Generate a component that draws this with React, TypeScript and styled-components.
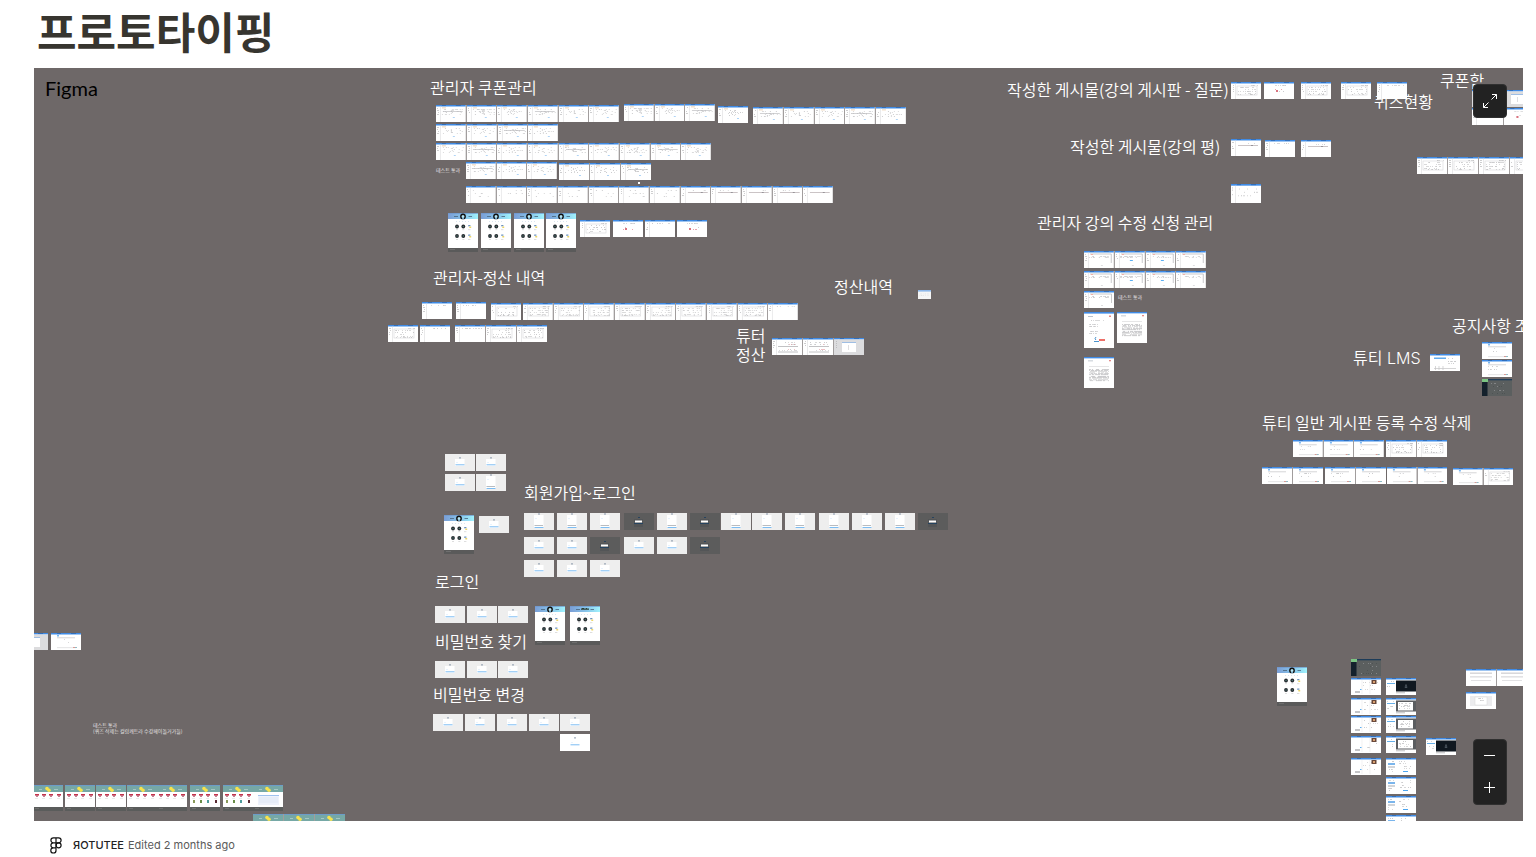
import React from 'react';
import styled, { createGlobalStyle } from 'styled-components';

const GlobalStyle = createGlobalStyle`
  * { box-sizing: border-box; }
  body {
    margin: 0;
    background: #fff;
    color: #37352f;
    font-family: Inter, "Noto Sans CJK KR", sans-serif;
  }
`;

const Page = styled.main`
  display: flex;
  flex-direction: column;
  min-height: 100vh;
  padding: 0 13px 0 34px;
`;

const Title = styled.h1`
  margin: 0;
  padding: 0 3px 8px;
  font-family: "Noto Sans CJK KR", sans-serif;
  font-size: 43px;
  font-weight: 700;
  line-height: 60px;
`;

const Embed = styled.section`
  position: relative;
  flex: 1 0 auto;
  min-height: 480px;
  overflow: hidden;
  background: #6e6868;
`;

const Logo = styled.a`
  position: absolute;
  top: 8px;
  left: 11px;
  color: #000;
  font-family: Lato, sans-serif;
  font-size: 20px;
  line-height: 24px;
  text-decoration: none;
`;

/* The board is panned: its origin lies up and left of the visible area. */
const Board = styled.div`
  position: absolute;
  top: -68px;
  left: -34px;
`;

const Label = styled.p<{ $x: number; $y: number; $small?: boolean; $latin?: boolean }>`
  position: absolute;
  left: ${(p) => p.$x}px;
  top: ${(p) => p.$y}px;
  margin: 0;
  color: ${(p) => (p.$small ? '#e2e0e0' : '#fff')};
  font-family: ${(p) => (p.$latin ? 'Inter, ' : '')}"Noto Sans CJK KR", sans-serif;
  font-size: ${(p) => (p.$small ? 5 : 16)}px;
  font-weight: ${(p) => (p.$small ? 400 : 350)};
  line-height: ${(p) => (p.$small ? 6 : 19)}px;
  white-space: pre;
`;

const Run = styled.div<{ $x: number; $y: number; $w: number; $h: number }>`
  position: absolute;
  left: ${(p) => p.$x}px;
  top: ${(p) => p.$y}px;
  width: ${(p) => p.$w}px;
  height: ${(p) => p.$h}px;
  display: flex;
  gap: 1px;
  background: #a19d9d;
`;

const Thumb = styled.svg`
  display: block;
  flex: 1 1 0;
  min-width: 0;
  height: 100%;
`;

const Controls = styled.div<{ $edge: 'top' | 'bottom' }>`
  position: absolute;
  right: 16px;
  ${(p) => p.$edge}: 16px;
  display: flex;
  flex-direction: column;
  border: 1px solid #303030;
  border-radius: 4px;
  background: #222;
`;

const ControlButton = styled.button`
  display: flex;
  align-items: center;
  justify-content: center;
  width: 32px;
  height: 32px;
  padding: 0;
  border: 0;
  background: transparent;
  color: #fff;
  cursor: pointer;
`;

const Footer = styled.footer`
  display: flex;
  align-items: center;
  height: 36px;
  padding: 12px 16px 0;
  font-size: 11px;
  line-height: 16px;
`;

const FooterIcon = styled.svg`
  width: 12px;
  height: 17px;
  margin-right: 11px;
`;

const FileLink = styled.a`
  margin-right: 4px;
  color: #222;
  font-weight: 500;
  text-decoration: none;
`;

const Edited = styled.span`
  color: #5a5a5a;
`;

type Kind =
  | 'table' | 'sparse' | 'line' | 'grid' | 'empty' | 'redTable' | 'redForm' | 'doc' | 'code' | 'notice'
  | 'login' | 'loginTall' | 'darkLogin' | 'whiteLogin' | 'modal' | 'dialog' | 'landing' | 'node'
  | 'shop' | 'shopFull' | 'calendar' | 'course' | 'player' | 'playerDoc' | 'settings' | 'darkLms'
  | 'list' | 'admin' | 'schedule' | 'blank';

type Mark = { x: number; y: number; w: number; c: string };

const noise = (n: number) => {
  const v = Math.sin(n * 12.9898) * 43758.5453;
  return v - Math.floor(v);
};

const scatter = (
  seed: number,
  rows: number[],
  from: number,
  to: number,
  density: number,
  color = '#b9b9bb',
): Mark[] =>
  rows.flatMap((y, r) => {
    const marks: Mark[] = [];
    for (let x = from; x < to; x += 1) {
      const n = noise(seed * 31 + r * 57 + x * 3);
      if (n < density) marks.push({ x, y, w: 1, c: n < density / 3 ? '#a2a2a5' : color });
    }
    return marks;
  });

function Marks({ items }: { items: Mark[] }) {
  return (
    <>
      {items.map((m, i) => (
        <rect key={i} x={m.x} y={m.y} width={m.w} height={1} fill={m.c} opacity={0.55} />
      ))}
    </>
  );
}

function TopBar() {
  return (
    <>
      <rect width={30} height={1.5} fill="#3f8be6" />
      <rect x={6} width={4} height={1} fill="#2f6fbe" />
      <rect x={20} width={5} height={1} fill="#2f6fbe" />
    </>
  );
}

function SideBar({ seed }: { seed: number }) {
  return (
    <>
      <rect x={4} y={1.5} width={0.6} height={15.5} fill="#dcdcde" />
      <Marks items={scatter(seed, [3, 5, 7, 9], 1, 3, 0.6, '#a5a5a8')} />
    </>
  );
}

function LoginCard({ tall, dark }: { tall?: boolean; dark?: boolean }) {
  if (dark) {
    return (
      <g>
        <rect x={10} y={6} width={9} height={8} fill="#535557" />
        <rect x={14} y={4} width={2} height={1} fill="#27435f" />
        <rect x={11} y={7.5} width={7} height={2} fill="#fff" />
        <rect x={10} y={10} width={9} height={1} fill="#25435f" />
      </g>
    );
  }
  const top = tall ? 2 : 5;
  return (
    <g>
      <rect x={10} y={top} width={9.5} height={tall ? 13 : 7} fill="#fff" />
      <rect x={14} y={tall ? 0.5 : 3.4} width={2} height={1} fill="#8a98ab" />
      {tall && <rect x={10.5} y={12} width={8.5} height={1} fill="#b9bcc0" />}
      <rect x={10.5} y={tall ? 14 : 10.3} width={9} height={1} fill="#7dbdf3" />
      <rect x={11.5} y={top + 3} width={1} height={0.6} fill="#b5d8f7" />
    </g>
  );
}

function Logos() {
  return (
    <g>
      {[13.5, 23].map((cy) => (
        <g key={cy}>
          {[9, 15.3].map((cx) => (
            <g key={cx}>
              <circle cx={cx} cy={cy} r={1.9} fill="#25292e" />
              <circle cx={cx} cy={cy} r={0.7} fill="#4f7c74" />
              <rect x={cx - 1} y={cy + 3} width={2} height={0.6} fill="#c9c9c9" />
            </g>
          ))}
          <path d={`M20.2 ${cy}v-1.6h2.2v1.4h-1.6z`} fill="#6b92bd" />
          <path d={`M21.2 ${cy}h2v1.6h-1.8z`} fill="#ecd667" />
          <rect x={20} y={cy + 3} width={2.4} height={0.6} fill="#c9c9c9" />
        </g>
      ))}
    </g>
  );
}

function Landing({ node }: { node?: boolean }) {
  return (
    <Thumb viewBox="0 0 30 39" preserveAspectRatio="none">
      <defs>
        <linearGradient id="hero">
          <stop offset="0" stopColor="#7a9ed6" />
          <stop offset="0.5" stopColor="#86c2e8" />
          <stop offset="1" stopColor="#a0f2fd" />
        </linearGradient>
      </defs>
      <rect width={30} height={35} fill="#fff" />
      <rect width={30} height={6} fill="url(#hero)" />
      <rect width={30} height={0.7} fill="#6f96c9" />
      <rect x={6} y={3} width={4} height={0.8} fill="#49657c" />
      <rect x={20.5} y={3} width={3.5} height={0.8} fill="#49657c" />
      {node ? (
        <path d="M11 3.2h8M12 2.6h2M16 2.6h1" stroke="#2e4034" strokeWidth={1.3} />
      ) : (
        <>
          <circle cx={15} cy={3.4} r={2.2} fill="#b7e8f6" stroke="#111" strokeWidth={1.4} />
          <rect x={14.3} y={4.6} width={1.5} height={1.6} fill="#86c2e8" />
        </>
      )}
      <Marks items={[8, 11, 14, 17, 20].map((x) => ({ x, y: 8, w: 1, c: '#bcd0e4' }))} />
      <Logos />
      <rect y={35} width={30} height={4} fill="#5a5a5a" />
      <rect x={2} y={36} width={5} height={0.7} fill="#777" />
    </Thumb>
  );
}

function Shop({ kind }: { kind: Kind }) {
  return (
    <Thumb viewBox="0 0 30 26" preserveAspectRatio="none">
      <rect width={30} height={22} fill="#fff" />
      <rect width={30} height={7} fill="#76a8a6" />
      <rect width={30} height={1} fill="#6b9cc9" />
      <circle cx={14} cy={3.6} r={1.8} fill="#f7e34d" />
      <circle cx={16} cy={5.2} r={1.8} fill="#f7e34d" />
      <rect x={6} y={4} width={3} height={0.7} fill="#b9d5d2" />
      <rect x={21} y={4} width={4} height={0.7} fill="#b9d5d2" />
      {kind === 'calendar' ? (
        <>
          <rect x={5} y={10} width={21} height={10} fill="#eef2fb" />
          <rect x={5} y={10} width={21} height={1} fill="#9fc2ee" />
          <path d="M6 13h19M6 15h19M6 17h19" stroke="#d5dff0" strokeWidth={0.6} />
        </>
      ) : (
        [2, 9, 16, 24].map((x, i) => (
          <g key={x}>
            <rect x={x} y={9} width={4} height={1.6} fill="#c4324b" />
            <rect x={x + 1} y={10.4} width={2} height={1.4} fill="#b76478" />
            <rect x={x} y={13} width={3} height={0.6} fill="#dcdcdc" />
            {kind === 'shopFull' && (
              <rect x={x + 1} y={15} width={2} height={3} fill={['#8a9a5b', '#6a8f49', '#4f9c9c', '#5a2b33'][i]} />
            )}
          </g>
        ))
      )}
      <rect y={22} width={30} height={4} fill="#5a5c5b" />
      <rect x={2} y={23} width={4} height={0.7} fill="#777" />
    </Thumb>
  );
}

function Body({ kind, seed }: { kind: Kind; seed: number }) {
  switch (kind) {
    case 'table':
      return (
        <>
          <SideBar seed={seed} />
          <rect x={6} y={2.500} width={4} height={0.8} fill="#e8c6a0" />
          <Marks items={scatter(seed, [4, 6, 7, 9], 6, 28, 0.28)} />
          <Marks items={scatter(seed + 5, [5, 8], 14, 18, 0.6)} />
          {seed % 3 === 0 && <rect x={7} y={6} width={20} height={0.6} fill="#b5b5b8" />}
          <rect x={17 + (seed % 4)} y={12} width={2} height={0.8} fill="#9ccaf4" />
        </>
      );
    case 'admin':
      return (
        <>
          <SideBar seed={seed} />
          <path d="M6 3h21.500v9" fill="none" stroke="#bcbcbe" strokeWidth={0.8} />
          <rect x={7} y={3} width={2} height={1} fill="#f0b0a8" />
          <Marks items={scatter(seed, [5, 6], 5, 26, 0.36)} />
          <rect x={15} y={9} width={3} height={1} fill={seed % 4 === 0 || seed % 4 === 3 ? '#fff' : '#5aaef2'} />
          <rect x={17} y={14} width={2} height={0.7} fill="#d0d0d2" />
        </>
      );
    case 'sparse':
      return (
        <>
          <SideBar seed={seed} />
          <Marks items={scatter(seed, [4, 7, 10], 7, 27, 0.16)} />
        </>
      );
    case 'line':
      return (
        <>
          <SideBar seed={seed} />
          <Marks items={scatter(seed, [4], 8, 25, 0.2)} />
          <rect x={7} y={6} width={20} height={0.7} fill="#b5abae" />
          <rect x={20} y={6} width={2} height={1} fill="#979398" />
        </>
      );
    case 'grid':
      return (
        <>
          <SideBar seed={seed} />
          <rect x={6} y={4} width={20} height={9} fill="none" stroke="#d8d8da" strokeWidth={0.6} />
          <Marks items={scatter(seed, [5, 7, 9, 11, 12], 7, 26, 0.34)} />
          <Marks items={scatter(seed, [3], 20, 27, 0.7)} />
        </>
      );
    case 'list':
      return (
        <>
          <rect x={4} y={3.5} width={22} height={1.4} fill="#d4d4d7" />
          <rect x={4} y={7} width={22} height={1.6} fill="#e2e2e4" />
          <rect x={5} y={11} width={20} height={1} fill="#e2e2e4" />
        </>
      );
    case 'redTable':
      return (
        <>
          <SideBar seed={seed} />
          <Marks items={scatter(seed, [4, 6, 12], 6, 26, 0.36)} />
          <path d="M6 8.500h20M6 14h20" stroke="#b3b3b5" strokeWidth={0.8} />
          <Marks items={scatter(seed + 3, [6, 11], 16, 23, 0.4, '#e08a94')} />
        </>
      );
    case 'redForm':
      return (
        <>
          <Marks items={scatter(seed, [3], 10, 22, 0.5)} />
          <Marks items={scatter(seed + 1, [7, 9], 10, 22, 0.22, '#d65a6c')} />
          <rect x={12} y={8} width={2} height={2} fill="#d9737f" />
        </>
      );
    case 'notice':
      return (
        <>
          <rect x={6} y={2} width={2} height={1.500} fill="#7bb7f0" />
          <rect x={6} y={4.500} width={18} height={0.7} fill="#c4c4c6" />
          <Marks items={scatter(seed, [6, 9], 6, 18, 0.2)} />
          <rect x={6} y={14.5} width={19} height={0.6} fill="#d2d2d4" />
          <rect x={22} y={14} width={2} height={1} fill="#d99a95" />
          <rect x={24} y={14} width={2} height={1} fill="#8fbcc5" />
        </>
      );
    case 'modal':
      return (
        <>
          <rect y={1.5} width={30} height={15.5} fill="#dcdcde" />
          <SideBar seed={seed} />
          <rect x={8} y={4} width={14} height={10} fill="#fff" />
          <rect x={8} y={4} width={14} height={0.8} fill="#88aede" />
          <path d="M14.500 7v5" stroke="#c8c8cc" strokeWidth={0.6} />
        </>
      );
    case 'dialog':
      return (
        <>
          <rect x={4} y={4} width={22} height={10} fill="#ececee" />
          <rect x={9} y={5} width={12} height={8} fill="#fff" stroke="#d6d6d8" strokeWidth={0.5} />
          <Marks items={scatter(seed, [6, 8], 11, 18, 0.4)} />
        </>
      );
    case 'schedule':
      return (
        <>
          <rect x={4} y={3.500} width={12} height={1.500} fill="#62acf0" />
          <Marks items={scatter(seed, [4, 7, 9], 18, 27, 0.45)} />
          <path d="M5.500 12v4M9 12v4M13 12v4M4 14.500h22" stroke="#c4c4c6" strokeWidth={0.7} />
        </>
      );
    case 'course':
      return (
        <>
          <Marks items={scatter(seed, [4, 7, 11], 12, 27, 0.26)} />
          <rect x={20.5} y={2} width={5} height={4} fill="#68483b" />
          <rect x={22} y={3} width={2} height={2} fill="#d9a070" />
          <path d="M11 2v14M19 2v14" stroke="#ececee" strokeWidth={0.7} />
          <rect x={4} y={13} width={5} height={2} fill="#c4c4c7" />
          <rect x={9} y={11} width={1.5} height={1} fill="#5aaef2" />
        </>
      );
    case 'player':
    case 'playerDoc':
      return (
        <>
          <rect x={1} y={5} width={8} height={1} fill="#65aee8" />
          <Marks items={scatter(seed, [3, 8, 10], 1, 8, 0.3)} />
          <rect x={10} y={2.500} width={20} height={11} fill={kind === 'player' ? '#101820' : '#5b5d60'} />
          {kind === 'player' ? (
            <path d="M19 9.500l1-3 1 3z" fill="none" stroke="#67717a" strokeWidth={0.6} />
          ) : (
            <>
              <rect x={12} y={4} width={15} height={8.500} fill="#fff" />
              <Marks items={scatter(seed, [5, 7, 8, 10], 13, 25, 0.4)} />
            </>
          )}
          <rect x={10} y={14.500} width={9} height={0.7} fill="#a5a5a8" />
        </>
      );
    case 'settings':
      return (
        <>
          <rect x={2} y={5} width={7} height={2} fill="#7ab5ec" />
          <rect x={2} y={8} width={7} height={2} fill="#d2d5d9" />
          <Marks items={scatter(seed, [3, 11, 13], 2, 8, 0.4)} />
          <Marks items={scatter(seed + 2, [3, 5, 8, 10], 13, 25, 0.2)} />
          <rect x={17} y={13} width={5} height={1} fill="#4ea6f0" />
        </>
      );
    case 'empty':
      return (
        <>
          <SideBar seed={seed} />
          <Marks items={scatter(seed, [3], 7, 27, 0.4)} />
        </>
      );
    default:
      return null;
  }
}

function Frame({ kind, seed }: { kind: Kind; seed: number }) {
  if (kind === 'landing' || kind === 'node') return <Landing node={kind === 'node'} />;
  if (kind === 'shop' || kind === 'shopFull' || kind === 'calendar') return <Shop kind={kind} />;
  if (kind === 'blank') {
    return (
      <Thumb viewBox="0 0 30 17" preserveAspectRatio="none">
        <rect width={30} height={17} fill="#f6f6f6" />
        <rect width={30} height={3} fill="#8fb8ea" />
        <Marks items={scatter(seed, [7, 10], 4, 26, 0.3)} />
      </Thumb>
    );
  }
  if (kind === 'doc' || kind === 'code') {
    return (
      <Thumb viewBox="0 0 30 36" preserveAspectRatio="none">
        <rect width={30} height={36} fill="#fff" />
        <rect width={30} height={1.6} fill="#3f8be6" />
        <rect x={4} y={4} width={5} height={1} fill="#b9c2cc" />
        <rect x={25} y={3.5} width={2} height={1.5} fill="#e58a88" />
        {kind === 'doc' ? (
          <>
            <Marks items={scatter(seed, [8, 12, 14, 19, 21], 5, 14, 0.7)} />
            <Marks items={scatter(seed + 1, [8], 14, 20, 0.6)} />
            <path d="M12 25q-2 2 0 3M10 29.500h5" fill="none" stroke="#4d93cc" strokeWidth={1} />
            <rect x={15} y={27} width={6} height={2} fill="#ee7068" />
          </>
        ) : (
          <>
            <rect x={5} y={11} width={20} height={0.6} fill="#cfcfd1" />
            <Marks
              items={scatter(seed, [14, 15, 16, 18, 19, 20, 22, 23, 24, 26, 27], 5, 25, 0.75, '#99999c')}
            />
          </>
        )}
      </Thumb>
    );
  }
  if (kind === 'darkLms') {
    return (
      <Thumb viewBox="0 0 30 17" preserveAspectRatio="none">
        <rect width={30} height={17} fill="#5b5f5f" />
        <rect width={30} height={1.3} fill="#1d3c59" />
        <rect width={5.5} height={17} fill="#14212c" />
        <rect width={6} height={3} fill="#7cc583" />
        <Marks items={scatter(seed, [4, 7, 11, 14], 8, 27, 0.2, '#44484a')} />
      </Thumb>
    );
  }
  const isLogin = kind === 'login' || kind === 'loginTall' || kind === 'darkLogin' || kind === 'whiteLogin';
  const background = kind === 'darkLogin' ? '#5c5c5c' : isLogin && kind !== 'whiteLogin' ? '#eee' : '#fff';
  return (
    <Thumb viewBox="0 0 30 17" preserveAspectRatio="none">
      <rect width={30} height={17} fill={background} />
      {isLogin ? <LoginCard tall={kind === 'loginTall'} dark={kind === 'darkLogin'} /> : <TopBar />}
      <Body kind={kind} seed={seed} />
    </Thumb>
  );
}

type RunSpec = { x: number; y: number; w?: number; h?: number; kinds: Kind[] };

const repeat = (kind: Kind, n: number): Kind[] => Array.from({ length: n }, () => kind);
const at = (y: number, xs: number[], kind: Kind, h?: number): RunSpec[] =>
  xs.map((x) => ({ x, y, h, kinds: [kind] }));

const runs: RunSpec[] = [
  { x: 436, y: 105, w: 183, kinds: repeat('table', 6) },
  { x: 624, y: 104, w: 91, kinds: repeat('table', 3) },
  { x: 718, y: 106, kinds: ['table'] },
  { x: 753, y: 107, w: 153, kinds: repeat('table', 5) },
  { x: 436, y: 124, w: 122, kinds: repeat('table', 4) },
  { x: 436, y: 143, w: 275, kinds: repeat('table', 9) },
  { x: 466, y: 162, w: 91, kinds: repeat('table', 3) },
  { x: 559, y: 163, w: 92, kinds: repeat('table', 3) },
  { x: 638, y: 182, w: 2, h: 2, kinds: ['whiteLogin'] },
  { x: 466, y: 186, w: 367, kinds: [...repeat('sparse', 7), ...repeat('line', 5)] },
  ...at(213, [448, 481, 514, 546], 'landing', 39),
  { x: 580, y: 220, kinds: ['grid'] },
  { x: 613, y: 220, kinds: ['redForm'] },
  { x: 645, y: 220, kinds: ['empty'] },
  { x: 677, y: 220, kinds: ['redForm'] },

  ...at(302, [422, 456], 'empty'),
  { x: 491, y: 303, kinds: ['grid'] },
  { x: 523, y: 303, w: 275, kinds: [...repeat('grid', 8), 'empty'] },
  { x: 388, y: 325, kinds: ['grid'] },
  { x: 420, y: 325, kinds: ['empty'] },
  { x: 455, y: 325, w: 92, kinds: ['empty', 'grid', 'grid'] },
  { x: 772, y: 338, w: 92, kinds: ['redTable', 'redTable', 'modal'] },
  { x: 918, y: 290, w: 13, h: 9, kinds: ['blank'] },

  ...at(82, [1231, 1301, 1341], 'grid'),
  { x: 1264, y: 82, kinds: ['redForm'] },
  { x: 1377, y: 82, kinds: ['empty'] },
  { x: 1231, y: 139, kinds: ['line'] },
  { x: 1265, y: 140, kinds: ['empty'] },
  { x: 1301, y: 140, kinds: ['line'] },
  { x: 1231, y: 184, h: 19, kinds: ['sparse'] },
  { x: 1417, y: 157, w: 123, kinds: repeat('grid', 4) },
  { x: 1472, y: 90, w: 61, kinds: ['modal', 'modal'] },
  { x: 1472, y: 108, w: 63, kinds: ['empty', 'redForm'] },

  { x: 1084, y: 251, w: 122, kinds: repeat('admin', 4) },
  { x: 1084, y: 271, w: 122, kinds: repeat('admin', 4) },
  { x: 1084, y: 291, kinds: ['admin'] },
  { x: 1084, y: 312, h: 36, kinds: ['doc'] },
  { x: 1117, y: 312, h: 31, kinds: ['code'] },
  { x: 1084, y: 357, h: 31, kinds: ['code'] },

  { x: 1430, y: 354, kinds: ['schedule'] },
  ...at(342, [1482], 'notice'),
  ...at(360, [1482], 'notice'),
  { x: 1482, y: 379, kinds: ['darkLms'] },
  { x: 1293, y: 440, w: 91, kinds: repeat('notice', 3) },
  { x: 1386, y: 440, w: 61, kinds: ['grid', 'grid'] },
  { x: 1262, y: 467, w: 61, kinds: ['notice', 'notice'] },
  { x: 1325, y: 467, w: 61, kinds: ['notice', 'notice'] },
  { x: 1387, y: 467, w: 60, kinds: ['notice', 'notice'] },
  { x: 1453, y: 468, w: 60, kinds: ['notice', 'grid'] },

  ...at(454, [445, 476], 'login'),
  { x: 445, y: 474, kinds: ['login'] },
  { x: 476, y: 474, kinds: ['loginTall'] },
  { x: 444, y: 515, h: 39, kinds: ['landing'] },
  { x: 479, y: 516, kinds: ['login'] },
  ...at(513, [524, 557, 590, 657, 721, 752, 785, 819, 852, 885], 'loginTall'),
  ...at(513, [624, 690, 918], 'darkLogin'),
  ...at(537, [524, 557, 624, 657], 'login'),
  ...at(537, [590, 690], 'darkLogin'),
  ...at(560, [524, 557, 590], 'login'),
  ...at(606, [435, 467, 498], 'login'),
  { x: 535, y: 606, h: 39, kinds: ['landing'] },
  { x: 570, y: 606, h: 39, kinds: ['node'] },
  ...at(661, [435, 467, 498], 'login'),
  ...at(714, [433, 465, 497, 529, 560], 'login'),
  { x: 560, y: 734, kinds: ['whiteLogin'] },

  { x: 18, y: 633, kinds: ['modal'] },
  { x: 51, y: 633, kinds: ['notice'] },
  ...at(785, [33, 65, 96, 127, 157], 'shop', 26),
  ...at(785, [190, 223], 'shopFull', 26),
  { x: 253, y: 785, h: 26, kinds: ['calendar'] },
  { x: 253, y: 814, w: 92, h: 26, kinds: repeat('shop', 3) },

  { x: 1277, y: 667, h: 39, kinds: ['landing'] },
  { x: 1351, y: 659, kinds: ['darkLms'] },
  ...[678, 698, 716, 736, 758].flatMap((y) => at(y, [1351], 'course')),
  { x: 1386, y: 678, kinds: ['player'] },
  ...[698, 716, 736].flatMap((y) => at(y, [1386], 'playerDoc')),
  ...[758, 777, 796, 815].flatMap((y) => at(y, [1386], 'settings')),
  { x: 1426, y: 738, kinds: ['player'] },
  { x: 1466, y: 669, w: 61, kinds: ['list', 'list'] },
  { x: 1466, y: 692, kinds: ['dialog'] },
];

type LabelSpec = { x: number; y: number; text: string; small?: boolean; latin?: boolean };

const labels: LabelSpec[] = [
  { x: 430, y: 78, text: '관리자 쿠폰관리' },
  { x: 1007, y: 80, text: '작성한 게시물(강의 게시판 - 질문)' },
  { x: 1440, y: 71, text: '쿠폰함' },
  { x: 1374, y: 92, text: '퀴즈현황' },
  { x: 1070, y: 137, text: '작성한 게시물(강의 평)' },
  { x: 1037, y: 213, text: '관리자 강의 수정 신청 관리' },
  { x: 433, y: 268, text: '관리자-정산 내역' },
  { x: 834, y: 277, text: '정산내역' },
  { x: 736, y: 326, text: '튜터\n정산' },
  { x: 1452, y: 316, text: '공지사항 조' },
  { x: 1353, y: 349, text: '튜티 LMS', latin: true },
  { x: 1262, y: 413, text: '튜티 일반 게시판 등록 수정 삭제' },
  { x: 524, y: 483, text: '회원가입~로그인' },
  { x: 435, y: 572, text: '로그인' },
  { x: 435, y: 632, text: '비밀번호 찾기' },
  { x: 433, y: 685, text: '비밀번호 변경' },
  { x: 436, y: 167, text: '테스트 통과', small: true },
  { x: 1118, y: 294, text: '테스트 통과', small: true },
  { x: 93, y: 722, text: '테스트 통과\n(퀴즈 삭제는 컬럼캐트라 수강페이돌거가들)', small: true },
];

export default function App() {
  return (
    <>
      <GlobalStyle />
      <Page>
        <Title>프로토타이핑</Title>
        <Embed aria-label="Figma">
          <Board>
            {labels.map((l) => (
              <Label key={`${l.x}-${l.y}`} $x={l.x} $y={l.y} $small={l.small} $latin={l.latin}>
                {l.text}
              </Label>
            ))}
            {runs.map((r, i) => (
              <Run key={i} $x={r.x} $y={r.y} $w={r.w ?? 30} $h={r.h ?? 17}>
                {r.kinds.map((kind, k) => (
                  <Frame key={k} kind={kind} seed={kind === 'admin' ? k : i + k} />
                ))}
              </Run>
            ))}
          </Board>
          <Logo href="#figma">Figma</Logo>
          <Controls $edge="top">
            <ControlButton type="button" aria-label="Full screen">
              <svg width="16" height="16" viewBox="0 0 16 16" fill="none" stroke="currentColor">
                <path d="M10 1.500h4.500V6M14.500 1.500l-5 5M1.500 10v4.500H6M1.500 14.500l5-5" />
              </svg>
            </ControlButton>
          </Controls>
          <Controls $edge="bottom">
            <ControlButton type="button" aria-label="Zoom out">
              <svg width="12" height="12" viewBox="0 0 12 12" stroke="currentColor">
                <path d="M0 5.500h11" />
              </svg>
            </ControlButton>
            <ControlButton type="button" aria-label="Zoom in">
              <svg width="12" height="12" viewBox="0 0 12 12" stroke="currentColor">
                <path d="M0 5.500h11M5.500 0v11" />
              </svg>
            </ControlButton>
          </Controls>
        </Embed>
        <Footer>
          <FooterIcon viewBox="0 0 12 17" fill="none" stroke="#111" strokeWidth="1.2">
            <path d="M6 .8H3.400a2.500 2.500 0 0 0 0 5H6zM6 .8h2.600a2.500 2.500 0 0 1 0 5H6zM6 5.800H3.400a2.500 2.500 0 0 0 0 5H6zM6 10.800H3.400A2.600 2.600 0 1 0 6 13.400z" />
            <circle cx="8.600" cy="8.300" r="2.500" />
          </FooterIcon>
          <FileLink href="#file">ЯOTUTEE</FileLink>
          <Edited>Edited 2 months ago</Edited>
        </Footer>
      </Page>
    </>
  );
}
